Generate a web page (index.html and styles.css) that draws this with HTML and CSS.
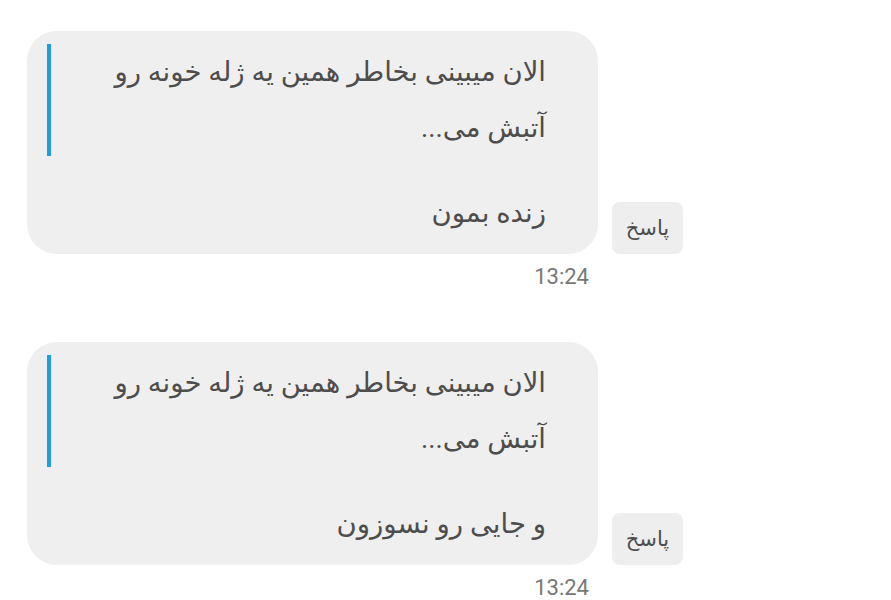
FILE: index.html
```html
<!DOCTYPE html>
<html lang="fa">
<head>
<meta charset="utf-8">
<link rel="stylesheet" href="styles.css">
</head>
<body>
<div class="chat">
  <div class="msg">
    <div class="row">
      <div class="bubble">
        <div class="quote">
          <div class="quote-text">الان میبینی بخاطر همین یه ژله خونه رو آتبش می...</div>
        </div>
        <div class="text">زنده بمون</div>
      </div>
      <div class="reply">پاسخ</div>
    </div>
    <div class="time">13:24</div>
  </div>
  <div class="msg">
    <div class="row">
      <div class="bubble">
        <div class="quote">
          <div class="quote-text">الان میبینی بخاطر همین یه ژله خونه رو آتبش می...</div>
        </div>
        <div class="text">و جایی رو نسوزون</div>
      </div>
      <div class="reply">پاسخ</div>
    </div>
    <div class="time">13:24</div>
  </div>
</div>
</body>
</html>
```
FILE: styles.css
```css
html, body {
  margin: 0;
  padding: 0;
  background: #ffffff;
}
body {
  font-family: Roboto, "DejaVu Sans", sans-serif;
  color: #4d4d4d;
}
.chat {
  padding: 31px 0 0 27px;
  display: flex;
  flex-direction: column;
  gap: 50px;
}
.msg {
  display: flex;
  flex-direction: column;
  width: 571px;
}
.row {
  display: flex;
  align-items: flex-end;
  gap: 14px;
}
.bubble {
  box-sizing: border-box;
  width: 571px;
  flex: none;
  background: #efefef;
  border-radius: 30px;
  padding: 13px 52px 13px 20px;
  direction: rtl;
}
.quote {
  direction: ltr;
  display: flex;
  border-left: 4px solid #1a9fe3;
  padding-left: 36px;
}
.quote-text {
  direction: rtl;
  flex: 1;
  font-size: 27.5px;
  line-height: 56px;
  text-align: right;
}
.text {
  margin-top: 29px;
  font-size: 27.5px;
  line-height: 56px;
  text-align: right;
}
.reply {
  flex: none;
  width: 71px;
  height: 52px;
  box-sizing: border-box;
  background: #eeeeee;
  border-radius: 8px;
  display: flex;
  align-items: center;
  justify-content: center;
  font-size: 21px;
  color: #4d4d4d;
  direction: rtl;
}
.time {
  text-align: right;
  padding-right: 9px;
  font-size: 22px;
  line-height: 30px;
  margin-top: 8px;
  color: #777777;
}
```
